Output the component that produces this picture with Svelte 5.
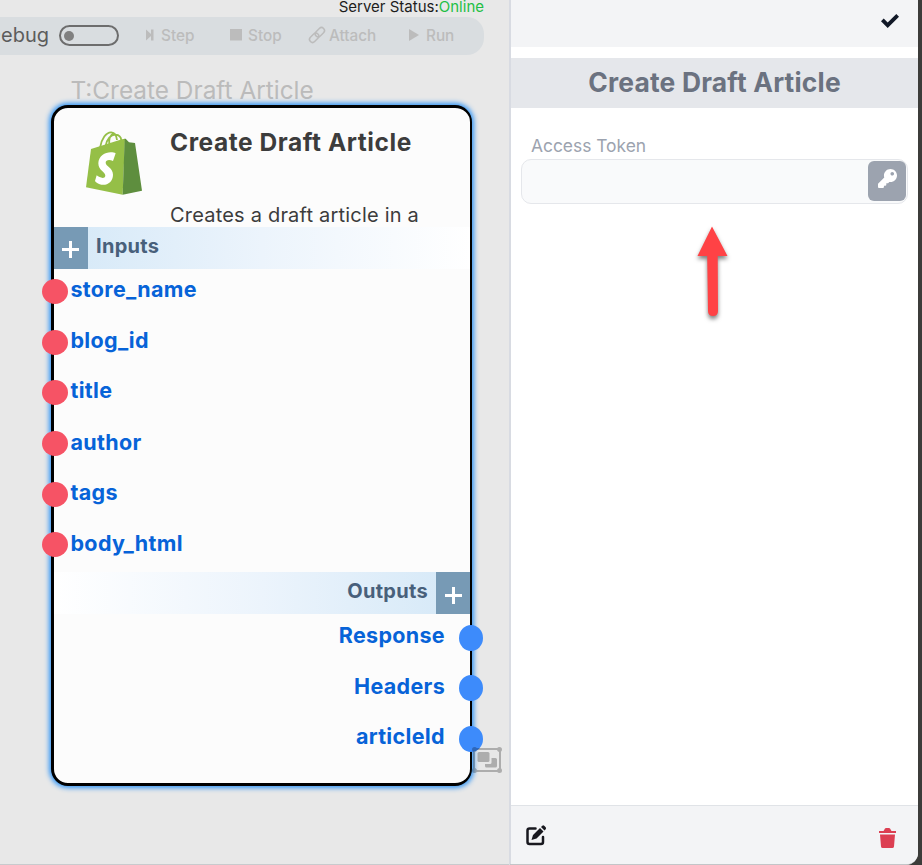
<script>
  const inputs = ['store_name', 'blog_id', 'title', 'author', 'tags', 'body_html'];
  const outputs = ['Response', 'Headers', 'articleId'];
</script>

<div class="app">
  <main class="canvas">
    <div class="status">Server Status:<span>Online</span></div>
    <div class="toolbar">
      <span class="debug">Debug</span>
      <span class="toggle"><i></i></span>
      <button class="step"><svg width="8" height="12" viewBox="0 0 8 12"><path d="M0 .5L5 5V.5H7.5V11.5H5V7L0 11.5Z" /></svg><span>Step</span></button>
      <button class="stop"><svg width="12" height="12" viewBox="0 0 12 12"><path d="M0 0H12V11.5H0Z" /></svg><span>Stop</span></button>
      <button class="attach"><svg width="16" height="16" viewBox="0 0 16 16"><g fill="none" stroke="#bcbcbc" stroke-width="1.500" transform="rotate(-45 8 8)"><rect x="-1.300" y="5" width="10.600" height="6" rx="3" /><rect x="6.700" y="5" width="10.600" height="6" rx="3" /></g></svg><span>Attach</span></button>
      <button class="run"><svg width="10" height="12" viewBox="0 0 10 12"><path d="M0 0L10 6L0 12Z" /></svg><span>Run</span></button>
    </div>

    <div class="node-label">T:Create Draft Article</div>

    <section class="node">
      <header class="node-head">
        <svg class="logo" width="56" height="64" viewBox="138 106 168 192">
          <path fill="none" stroke="#95bf47" stroke-width="5.500" d="M180 157C184 129 199 109 214 110C226 111 230 122 231 133M197 151C200 130 213 116 227 117C238 118 243 124 244 134M208 148C206 130 209 118 222 112" />
          <path fill="#95bf47" d="M153 160L246 131L255 129L248 297L138 275Z" />
          <path fill="#5e8e3e" d="M254 129L257 129L267 140L285 142L306 285L248 297Z" />
          <path fill="#fff" d="M227 173L219 196C209 191 197 192 197 201C197 212 219 216 219 237C219 258 202 270 184 267C174 265 167 260 165 256L170 239C178 246 194 251 196 241C197 229 175 225 175 203C176 181 195 170 212 170C219 170 223 171 227 173Z" />
        </svg>
        <div class="node-info">
          <h2>Create Draft Article</h2>
          <p>Creates a draft article in a</p>
        </div>
      </header>
      <div class="bar in"><b class="plus"></b><span>Inputs</span></div>
      <ul class="inputs">
        {#each inputs as name}
          <li><i></i><span>{name}</span></li>
        {/each}
      </ul>
      <div class="bar out"><span>Outputs</span><b class="plus"></b></div>
      <ul class="outputs">
        {#each outputs as name}
          <li><span>{name}</span><i></i></li>
        {/each}
      </ul>
    </section>

    <svg class="group" width="30" height="26" viewBox="0 0 30 26">
      <path fill-rule="evenodd" d="M2.500 0Q4 0 4.800 1H25.200Q26 0 27.500 0Q30 0 30 2.500Q30 4 29 4.800V21.200Q30 22 30 23.500Q30 26 27.500 26Q26 26 25.200 25H4.800Q4 26 2.500 26Q0 26 0 23.500Q0 22 1 21.200V4.800Q0 4 0 2.500Q0 0 2.500 0ZM5 3Q4.500 4.500 3 5V21Q4.500 21.500 5 23H25Q25.500 21.500 27 21V5Q25.500 4.500 25 3Z" />
      <rect x="5.500" y="5" width="12" height="10" rx="1.500" />
      <path d="M19.500 11H23.500Q25 11 25 12.500V19Q25 20.500 23.500 20.500H14.500Q13 20.500 13 19V17H18Q19.500 17 19.500 15.500Z" />
    </svg>
  </main>

  <aside class="panel">
    <div class="top">
      <svg width="18" height="15" viewBox="0 0 18 15"><path fill="#111827" d="M0 7.300L2.700 4.600L6.700 8.500L15.300 0L18 2.700L6.700 14Z" /></svg>
    </div>
    <h1>Create Draft Article</h1>
    <div class="form">
      <label for="token">Access Token</label>
      <div class="field">
        <input id="token" />
        <button class="key" aria-label="key"><svg width="19" height="19" viewBox="0 0 512 512"><path fill="#fff" d="M512 176.001C512 273.203 433.202 352 336 352c-11.220 0-22.190-1.062-32.827-3.069l-24.012 27.014A23.999 23.999 0 0 1 261.223 384H224v40c0 13.255-10.745 24-24 24h-40v40c0 13.255-10.745 24-24 24H24c-13.255 0-24-10.745-24-24v-78.059c0-6.365 2.529-12.470 7.029-16.971l161.802-161.802C163.108 213.814 160 195.271 160 176 160 78.798 238.797.001 335.999 0 433.488-.001 512 78.511 512 176.001zM336 128c0 26.510 21.490 48 48 48s48-21.490 48-48-21.490-48-48-48-48 21.490-48 48z" /></svg></button>
      </div>
    </div>
    <footer>
      <svg width="21" height="21" viewBox="0 0 21 21"><path d="M9.500 3.500H3.500Q1.500 3.500 1.500 5.500V17Q1.500 19 3.500 19H15Q17 19 17 17V12" fill="none" stroke="#18181f" stroke-width="2.500" stroke-linecap="round" /><path fill="#18181f" d="M14 3L17.500 6.500L10.500 13.500L5.500 15L7 10ZM15 2L16.300.7Q17.300 0 18.200.8L19.700 2.300Q20.500 3.200 19.700 4.200L18.500 5.500Z" /></svg>
      <svg width="17" height="20" viewBox="0 0 17 20"><path fill="#dc3f52" d="M0 3H4.500L6 .5Q6.300 0 7 0H10Q10.700 0 11 .5L12.500 3H17V5H0ZM1 6.500H16L15 18.500Q14.800 20 13.300 20H3.700Q2.200 20 2 18.500Z" /></svg>
    </footer>
  </aside>

  <svg class="arrow" width="50" height="110" viewBox="0 0 50 110">
    <path fill="#ff4245" d="M22 6.500L37.500 36H27.700L28 91Q28 96 23 96Q18 96 18 91L17.200 36H7.500Z" />
  </svg>
</div>

<style>
  * { box-sizing: border-box; }
  :global(body) { margin: 0; }
  .app { position: relative; display: flex; width: 922px; height: 865px; overflow: hidden; font-family: Inter, sans-serif; background: linear-gradient(90deg, #e8e8e8 510px, #3c3c3a 510px); }
  button { display: flex; align-items: center; padding: 0; border: 0; background: none; font: inherit; color: inherit; }
  h1, h2, p, ul { margin: 0; padding: 0; list-style: none; }
  .canvas { position: relative; width: 509px; flex: none; border-bottom: 1px solid #c8cacd; }
  .status { height: 17px; line-height: 13px; padding-right: 25px; text-align: right; font-size: 15px; color: #1d1d1d; white-space: nowrap; }
  .status span { color: #1fbf45; }
  .toolbar { display: flex; align-items: center; width: 484px; height: 38px; padding-bottom: 1px; background: #d9dde0; border-radius: 0 17px 17px 0; font-size: 15.300px; font-weight: 500; color: #bcbcbc; }
  .toolbar svg { fill: #bcbcbc; flex: none; margin-bottom: 2px; overflow: visible; }
  .debug { width: 49px; display: flex; justify-content: flex-end; flex: none; font-size: 20px; line-height: 20px; margin-bottom: 1px; font-weight: 400; color: #5c5c5c; }
  .toggle { display: flex; align-items: center; width: 60px; height: 21px; margin-left: 10px; padding-left: 3px; border: 2px solid #6d6d6d; border-radius: 11px; flex: none; }
  .toggle i { width: 10px; height: 10px; border-radius: 50%; background: #808080; }
  .step { width: 84px; margin-left: 27px; gap: 7px; }
  .stop { width: 79px; gap: 6px; }
  .attach { width: 100px; gap: 4px; }
  .run { gap: 7px; }
  .node-label { position: absolute; left: 70.500px; top: 75px; font-size: 24.400px; line-height: 31px; color: #bbb; white-space: nowrap; }
  .node { position: absolute; left: 51px; top: 105px; width: 421px; height: 681px; border: 3px solid #000; border-right-width: 2px; border-radius: 17px; background: #fcfcfc; box-shadow: 0 0 5px 2px #3295f5; }
  .node-head { display: flex; height: 119px; padding: 23px 0 0 32px; }
  .logo { flex: none; margin-right: 28px; }
  .node-info { color: #3c3c3c; white-space: nowrap; }
  h2 { font-size: 24.500px; line-height: 30px; margin-top: -4px; font-weight: 700; letter-spacing: .55px; }
  .node-info p { font-size: 20px; line-height: 26px; margin-top: 45px; letter-spacing: .2px; }
  .bar { display: flex; height: 42px; font-size: 20px; font-weight: 700; color: #48607b; letter-spacing: .3px; }
  .bar span { line-height: 38px; }
  .bar.in { background: linear-gradient(90deg, #d8eaf8 8%, #ecf4fc 50%, #fff); }
  .bar.out { justify-content: flex-end; background: linear-gradient(270deg, #d8eaf8 8%, #ecf4fc 50%, #fff); }
  .bar.in span { margin-left: 8px; }
  .bar.out span { margin-right: 8px; }
  .plus { width: 34px; height: 42px; background: linear-gradient(#fff, #fff) 8px 21px / 17px 3px no-repeat, linear-gradient(#fff, #fff) 15px 14px / 3px 17px no-repeat, #779ab5; }
  .out .plus { background-position: 9px 22px, 16px 15px, 0 0; }
  ul { display: flex; flex-direction: column; font-size: 21.500px; font-weight: 700; color: #0763d8; letter-spacing: .32px; }
  .inputs { height: 303px; gap: 6.600px; padding-top: .8px; }
  .outputs { padding-top: 1.500px; gap: 6.500px; }
  li { display: flex; align-items: center; height: 44px; }
  li span { margin-bottom: 5px; }
  .inputs i { width: 26px; height: 25px; margin: 0 3px 0 -12.500px; border-radius: 50%; background: #f65365; }
  .inputs li:nth-child(n + 4) span { margin-bottom: 4px; }
  .outputs li { justify-content: flex-end; }
  .outputs i { width: 24px; height: 26px; margin: 0 -13px 0 14px; border-radius: 50%; background: #3d8bfb; }
  .group { position: absolute; left: 472px; top: 747px; fill: #000; opacity: .25; }
  .panel { display: flex; flex-direction: column; width: 409px; flex: none; background: #fff; border-left: 2px solid #d8dbe2; border-bottom: 1px solid #c3c5c8; border-bottom-right-radius: 12px; overflow: hidden; }
  .top { display: flex; justify-content: flex-end; height: 47px; flex: none; padding: 14px 19.500px 0 0; background: #f3f4f6; }
  h1 { height: 50px; margin-top: 11px; background: #e5e7eb; color: #6b7280; font-size: 26.400px; line-height: 49px; text-align: center; font-weight: 700; letter-spacing: .2px; }
  .form { display: flex; flex-direction: column; flex: 1; padding: 26px 10px 0; }
  label { margin-left: 10px; font-size: 17.400px; line-height: 24px; color: #9ca3af; }
  .field { display: flex; height: 45px; width: 387px; margin-top: 1px; padding: 1px; border: 1px solid #e5e7eb; border-radius: 10px; background: #f9fafb; }
  input { flex: 1; min-width: 0; border: 0; background: none; outline: none; }
  .key { justify-content: center; align-items: flex-start; width: 38px; height: 40px; padding-top: 8px; border-radius: 6px; background: #9ca3af; }
  footer { display: flex; justify-content: space-between; align-items: flex-start; height: 59px; padding: 19px 22px 0 15px; background: #f3f4f6; border-top: 1px solid #e0e3e7; }
  footer svg:last-child { margin-top: 3px; }
  .arrow { position: absolute; left: 690px; top: 220px; filter: drop-shadow(0 3px 2px rgba(0, 0, 0, .5)); }
</style>
